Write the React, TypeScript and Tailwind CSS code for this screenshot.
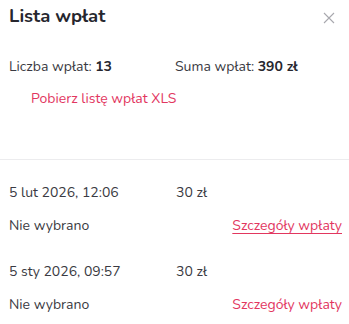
export default function App() {
  const items = [
    { date: "5 lut 2026, 12:06", amount: "30 zł", status: "Nie wybrano", hover: true },
    { date: "5 sty 2026, 09:57", amount: "30 zł", status: "Nie wybrano", hover: false },
  ];
  return (
    <div className="h-[324px] w-[349px] overflow-hidden bg-white font-['Nunito','Lato',sans-serif] text-[14px] text-[#3a3a42]">
      {/* Header */}
      <div className="flex items-start justify-between pl-[9px] pr-[14px] pt-[5px]">
        <h1 className="text-[18.5px] font-bold leading-[22px] text-[#26262e]">Lista wpłat</h1>
        <button className="mt-[7px] text-[#a8a8ae]">
          <svg width="12" height="12" viewBox="0 0 12 12" fill="none" stroke="currentColor" strokeWidth="1.1">
            <path d="M1 1l10 10M11 1L1 11" />
          </svg>
        </button>
      </div>

      {/* Summary */}
      <div className="mt-[30px] grid grid-cols-[166px_1fr] pl-[9px] leading-[20px]">
        <div>
          Liczba wpłat: <span className="font-bold text-[#26262e]">13</span>
        </div>
        <div>
          Suma wpłat: <span className="font-bold text-[#26262e]">390 zł</span>
        </div>
      </div>
      <div className="mt-[12px] pl-[31px] leading-[20px]">
        <a href="#" className="text-[#e2375f]">Pobierz listę wpłat XLS</a>
      </div>

      {/* Divider */}
      <div className="mt-[50px] border-t border-[#ececee]" />

      {/* Payments */}
      <div className="flex flex-col gap-[26px] pl-[9px] pr-[7px] pt-[23px]">
        {items.map((it) => (
          <div key={it.date} className="flex flex-col gap-[13px] leading-[20px]">
            <div className="grid grid-cols-[167px_1fr]">
              <span>{it.date}</span>
              <span>{it.amount}</span>
            </div>
            <div className="flex justify-between">
              <span>{it.status}</span>
              <a
                href="#"
                className={it.hover ? "text-[#e2375f] underline underline-offset-[3px]" : "text-[#e2375f]"}
              >
                Szczegóły wpłaty
              </a>
            </div>
          </div>
        ))}
      </div>
    </div>
  );
}
